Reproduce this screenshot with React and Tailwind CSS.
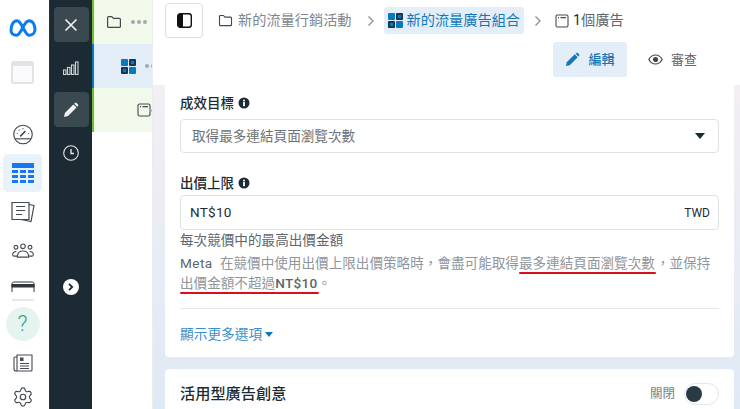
import React from 'react';
import { Settings } from 'lucide-react';

const Info = () => (
  <svg width="12" height="12" viewBox="0 0 12 12" className="shrink-0">
    <circle cx="6" cy="6" r="5.5" fill="#1c2b33" />
    <circle cx="6" cy="3.4" r="1" fill="#fff" />
    <rect x="5.1" y="5" width="1.8" height="4.2" fill="#fff" />
  </svg>
);

const Folder = ({ size = 14 }) => (
  <svg width={size} height={size} viewBox="0 0 16 16" fill="none" stroke="#444950" strokeWidth="1.2" className="shrink-0">
    <path d="M1.6 3.6c0-.6.4-1 1-1h3.2l1.6 1.800h6c.6 0 1 .4 1 1v7c0 .6-.4 1-1 1H2.600c-.6 0-1-.4-1-1z" />
  </svg>
);

const Grid4 = ({ size = 15, color = '#0a78be' }) => (
  <svg width={size} height={size} viewBox="0 0 15 15" className="shrink-0">
    <rect x="0" y="0" width="7" height="7" rx="1" fill={color} />
    <rect x="8" y="0" width="7" height="7" rx="1" fill="#12344d" />
    <rect x="9.800" y="1.800" width="3.400" height="3.400" fill={color} />
    <rect x="0" y="8" width="7" height="7" rx="1" fill="#12344d" />
    <rect x="1.800" y="9.800" width="3.400" height="3.400" fill={color} />
    <rect x="8" y="8" width="7" height="7" rx="1" fill={color} />
  </svg>
);

const AdBox = ({ size = 14 }) => (
  <svg width={size} height={size} viewBox="0 0 14 14" fill="none" stroke="#444950" strokeWidth="1.1" className="shrink-0">
    <rect x="1" y="1" width="12" height="12" rx="1.5" />
    <path d="M3 3.600h1M5.500 3.600h5.500" />
  </svg>
);

const Chevron = () => (
  <svg width="8" height="12" viewBox="0 0 8 12" fill="none" stroke="#8d949e" strokeWidth="1.4">
    <path d="M1.500 1.500 6 6l-4.500 4.500" />
  </svg>
);

const Pencil = ({ size = 16, color = '#fff' }) => (
  <svg width={size} height={size} viewBox="0 0 16 16" fill={color}>
    <path d="M1 15l.9-4L10.400 2.500l3.100 3.100L5 14.100z" />
    <path d="M11.200 1.700l.8-.7c.5-.4 1.100-.4 1.600 0l1.400 1.400c.4.5.4 1.100 0 1.600l-.7.8z" />
  </svg>
);

const Rail = () => (
  <div className="w-[50px] shrink-0 h-full bg-white border-r border-[#2a3238] pr-[4px] flex flex-col items-center">
    <svg width="28" height="18" viewBox="0 0 28 18" fill="none" stroke="#0a7cf0" strokeWidth="3" className="mt-[19px] shrink-0">
      <path d="M2 11.500C2 6 4.500 1.800 8 1.800c5 0 7.500 14.400 12 14.400 3.500 0 6-2.200 6-5.700 0-5-2.500-8.700-6-8.700-5.500 0-7.500 14.400-12.500 14.400C4 16.200 2 14.500 2 11.500z" />
    </svg>
    <div className="mt-[24px] w-[23px] h-[23px] shrink-0 rounded-[3px] border-2 border-[#e2e3e7] bg-[#fafafc]">
      <div className="h-[3px] bg-[#e2e3e7]" />
    </div>
    <svg width="22" height="21" viewBox="0 0 22 22" fill="none" stroke="#444950" strokeWidth="1.2" className="mt-[40px] shrink-0">
      <circle cx="11" cy="11" r="9.700" />
      <path d="M2.500 15.500h17" />
      <path d="M8 13 13.500 7.500" strokeWidth="1.600" />
      <path d="M4.500 10h1M16.500 10h1M11 4.500v1M6.500 6l.7.7" />
    </svg>
    <div className="mt-[9px] w-[39px] h-[38px] shrink-0 rounded-[5px] bg-[#e7f2fb] flex items-center justify-center">
      <svg width="22" height="20" viewBox="0 0 22 20" fill="#1877f2">
        <rect x="0" y="0" width="22" height="5" />
        <rect x="0" y="7" width="6" height="3" /><rect x="8" y="7" width="6" height="3" /><rect x="16" y="7" width="6" height="3" />
        <rect x="0" y="12" width="6" height="3" /><rect x="8" y="12" width="6" height="3" /><rect x="16" y="12" width="6" height="3" />
        <rect x="0" y="17" width="6" height="3" /><rect x="8" y="17" width="6" height="3" /><rect x="16" y="17" width="6" height="3" />
      </svg>
    </div>
    <svg width="24" height="23" viewBox="0 0 24 22" fill="none" stroke="#444950" strokeWidth="1.200" className="mt-[8px] shrink-0">
      <path d="M1 2h17v17H1z" />
      <path d="M18 4l5 1-3 16-10-2" />
      <path d="M5 6h9M5 10h9M5 14h6" />
    </svg>
    <svg width="24" height="15" viewBox="0 0 24 16" fill="none" stroke="#444950" strokeWidth="1.200" className="mt-[20px] shrink-0">
      <circle cx="12" cy="3.500" r="2.500" />
      <circle cx="4.500" cy="4.500" r="2" />
      <circle cx="19.500" cy="4.500" r="2" />
      <path d="M6 15c0-5 3-6.500 6-6.500S18 10 18 15z" />
      <path d="M5 9c-2 0-4 1-4 3.500 0 1 .5 1.500 1.500 1.500H6M19 9c2 0 4 1 4 3.500 0 1-.5 1.500-1.500 1.500H18" />
    </svg>
    <svg width="24" height="11" viewBox="0 0 24 11" className="mt-[23px] shrink-0">
      <path d="M1 11V3c0-1.200.8-2 2-2h18c1.200 0 2 .8 2 2v8" fill="none" stroke="#30363c" strokeWidth="1" />
      <rect x="0.500" y="3" width="23" height="3.500" fill="#30363c" />
    </svg>
    <div className="mt-[7px] w-[22px] h-[2px] shrink-0 bg-[#e6e8ea]" />
    <div className="mt-[6px] w-[34px] h-[34px] shrink-0 rounded-full bg-[#e6f4f0] flex items-center justify-center text-[#3f9a8d] text-[22px] leading-none font-light font-['Roboto',sans-serif]">
      ?
    </div>
    <svg width="20" height="18" viewBox="0 0 20 18" fill="none" stroke="#444950" strokeWidth="1.100" className="mt-[13px] shrink-0">
      <path d="M4 1h15v15c0 .8-.5 1-1 1H4z" />
      <path d="M4 3H2c-.6 0-1 .4-1 1v11c0 1.200 1 2 2 2h1" />
      <rect x="7" y="3.500" width="3.500" height="3.500" fill="#444950" stroke="none" />
      <path d="M7 9.500h9M7 12h9M7 14.500h9" />
    </svg>
    <Settings size={22} strokeWidth={1.3} color="#444950" className="mt-[14px] shrink-0" />
  </div>
);

const DarkBar = () => (
  <div className="w-[42px] shrink-0 h-full bg-[#1c2b33] flex flex-col items-center pt-[7px]">
    <div className="w-[35px] h-[35px] rounded-[4px] bg-[#3a4850] flex items-center justify-center">
      <svg width="14" height="14" viewBox="0 0 14 14" stroke="#f2f3f4" strokeWidth="1.600">
        <path d="M1.500 1.500l11 11M12.500 1.500l-11 11" />
      </svg>
    </div>
    <svg width="16" height="14" viewBox="0 0 16 14" fill="none" stroke="#cfd3d6" strokeWidth="1.100" className="mt-[19px]">
      <rect x="0.500" y="9" width="2.500" height="4.500" />
      <rect x="4.500" y="6.500" width="2.500" height="7" />
      <rect x="8.500" y="4" width="2.500" height="9.500" />
      <rect x="12.500" y="1" width="2.500" height="12.500" />
    </svg>
    <div className="mt-[17px] w-[35px] h-[35px] rounded-[4px] bg-[#3a4850] flex items-center justify-center">
      <Pencil size={16} color="#f2f3f4" />
    </div>
    <svg width="16" height="16" viewBox="0 0 16 16" fill="none" stroke="#e4e6e8" strokeWidth="1.100" className="mt-[18px]">
      <circle cx="8" cy="8" r="7.300" />
      <path d="M8 4v4.500h3" strokeWidth="1.400" />
    </svg>
    <div className="mt-[118px] w-[16px] h-[16px] rounded-full bg-white flex items-center justify-center">
      <svg width="6" height="8" viewBox="0 0 6 8" fill="none" stroke="#1c2b33" strokeWidth="1.800">
        <path d="M1 .8 4.200 4 1 7.200" />
      </svg>
    </div>
  </div>
);

const TreeRow = ({ active, pl, children }) => (
  <div
    className={`h-[44px] border-l-2 flex items-center overflow-hidden ${
      active ? 'bg-[#e3edf7] border-[#0a78be]' : 'bg-[#f1f9ea] border-[#6fbf2a]'
    }`}
    style={{ paddingLeft: pl }}
  >
    {children}
  </div>
);

const Dots = () => (
  <div className="flex gap-[2px] ml-[9px] shrink-0">
    <span className="w-[4px] h-[4px] rounded-full bg-[#a3a8ae]" />
    <span className="w-[4px] h-[4px] rounded-full bg-[#a3a8ae]" />
    <span className="w-[4px] h-[4px] rounded-full bg-[#a3a8ae]" />
  </div>
);

const Tree = () => (
  <div className="w-[61px] shrink-0 h-full bg-white border-r border-[#ececf0]">
    <TreeRow pl={12}>
      <Folder size={16} />
      <Dots />
    </TreeRow>
    <TreeRow active pl={27}>
      <Grid4 size={15} />
      <Dots />
    </TreeRow>
    <TreeRow pl={43}>
      <AdBox size={14} />
      <span className="w-[3px] h-[3px] rounded-full bg-[#a3a8ae] -ml-[2px] shrink-0" />
    </TreeRow>
  </div>
);

const Underline = ({ children }) => (
  <span className="relative">
    {children}
    <span className="absolute left-0 right-[-1px] bottom-[-3px] h-[2px] rounded-full bg-[#d8101c]" />
  </span>
);

const App = () => (
  <div lang="zh-Hant" className="w-[740px] h-[409px] overflow-hidden flex bg-white font-['Roboto','Noto_Sans_CJK_TC',sans-serif] text-[#1c2b33]">
    <Rail />
    <DarkBar />
    <Tree />
    <div className="flex-1 min-w-0 h-full flex flex-col">
      <div className="h-[85px] shrink-0 bg-white pl-[12px] pt-[3px]">
        <div className="flex items-center text-[14.2px] h-[35px]">
          <div className="w-[38px] h-[35px] rounded-[4px] border border-[#dcdfe2] flex items-center justify-center mr-[15px]">
            <svg width="15" height="15" viewBox="0 0 15 15">
              <rect x="0.700" y="0.700" width="13.600" height="13.600" rx="2.500" fill="#fff" stroke="#111" strokeWidth="1.400" />
              <path d="M3 .7h3v13.600H3C1.500 14.300.7 13.500.7 12V3C.7 1.500 1.500.7 3 .7z" fill="#111" />
            </svg>
          </div>
          <Folder size={15} />
          <span className="ml-[5px] text-[#80868c]">新的流量行銷活動</span>
          <span className="ml-[15px] mr-[9px] flex"><Chevron /></span>
          <div className="h-[27px] px-[4px] rounded-[3px] bg-[#e3eef8] flex items-center text-[#1478b8]">
            <Grid4 size={15} />
            <span className="ml-[4px]">新的流量廣告組合</span>
          </div>
          <span className="ml-[10px] mr-[13px] flex"><Chevron /></span>
          <AdBox size={14} />
          <span className="ml-[4px] text-[#5f666c]"><span className="text-[#1c2b33]">1</span>個廣告</span>
        </div>
        <div className="flex justify-end mt-[4px] pr-[43px]">
          <div className="w-[74px] h-[35px] rounded-[3px] bg-[#e3eef8] flex items-center justify-center text-[#1478b8] text-[13px] font-medium">
            <Pencil size={15} color="#1478b8" />
            <span className="ml-[8px]">編輯</span>
          </div>
          <div className="ml-[21px] h-[35px] flex items-center text-[13px] text-[#5f666c]">
            <svg width="15" height="11" viewBox="0 0 15 11" fill="none" stroke="#444950" strokeWidth="1.200">
              <path d="M.8 5.500C2.500 2.300 4.800 1 7.500 1s5 1.300 6.700 4.500C12.500 8.700 10.200 10 7.500 10S2.500 8.700.8 5.500z" />
              <circle cx="7.500" cy="5.500" r="2" fill="#444950" />
            </svg>
            <span className="ml-[8px]">審查</span>
          </div>
        </div>
      </div>
      <div className="flex-1 min-h-0 bg-gradient-to-b from-[#f3eff3] to-[#dfe9f5] pl-[12px] pr-[6px]">
        <div className="h-[272px] bg-white rounded-b-[4px] px-[15px] pt-[9px]">
          <div className="flex items-center gap-[4px] h-[18px] text-[13.5px] font-medium">
            成效目標 <Info />
          </div>
          <div className="mt-[7px] h-[34px] rounded-[4px] border border-[#dfe2e5] flex items-center justify-between pl-[11px] pr-[13px] text-[13.6px] text-[#6b7278]">
            <span>取得最多連結頁面瀏覽次數</span>
            <span className="w-0 h-0 border-x-[5px] border-x-transparent border-t-[6px] border-t-[#1c2b33]" />
          </div>
          <div className="mt-[21px] flex items-center gap-[4px] h-[18px] text-[13.5px] font-medium">
            出價上限 <Info />
          </div>
          <div className="mt-[3px] h-[35px] rounded-[4px] border border-[#dfe2e5] flex items-center justify-between pl-[9px] pr-[8px]">
            <span className="text-[13.5px] tracking-[0.3px]">NT$10</span>
            <span className="text-[12px]">TWD</span>
          </div>
          <div className="mt-[1px] h-[18px] text-[13.6px] leading-[18px] text-[#5f666c]">每次競價中的最高出價金額</div>
          <p className="mt-[4px] text-[13.6px] leading-[20px] text-[#90969c] whitespace-nowrap">
            <span className="text-[#5f666c] tracking-[0.4px] mr-[4px]">Meta</span> 在競價中使用出價上限出價策略時，會盡可能取得
            <Underline>最多連結頁面瀏覽次數</Underline><span className="ml-[1px]">，並保持</span>
            <br />
            <Underline>出價金額不超過<span className="text-[#5f666c] font-medium tracking-[0.3px]">NT$10</span></Underline>。
          </p>
          <div className="mt-[15px] h-px bg-[#e6e8ea]" />
          <div className="mt-[16px] flex items-center gap-[3px] text-[13.7px] leading-[18px] text-[#3d8fc9]">
            顯示更多選項
            <span className="w-0 h-0 border-x-[4px] border-x-transparent border-t-[5px] border-t-[#0a78be]" />
          </div>
        </div>
        <div className="mt-[12px] h-[60px] bg-white rounded-[4px] pl-[15px] pr-[15px] pt-[14px] flex items-start justify-between">
          <span className="text-[15.2px] leading-[22px] font-medium">活用型廣告創意</span>
          <div className="flex items-center">
            <span className="text-[12.5px] text-[#7a8086]">關閉</span>
            <div className="ml-[9px] w-[35px] h-[22px] rounded-full border border-[#e3e5e8] flex items-center pl-[1px]">
              <span className="w-[16px] h-[16px] rounded-full bg-[#2a3a45]" />
            </div>
          </div>
        </div>
      </div>
    </div>
  </div>
);

export default App;
